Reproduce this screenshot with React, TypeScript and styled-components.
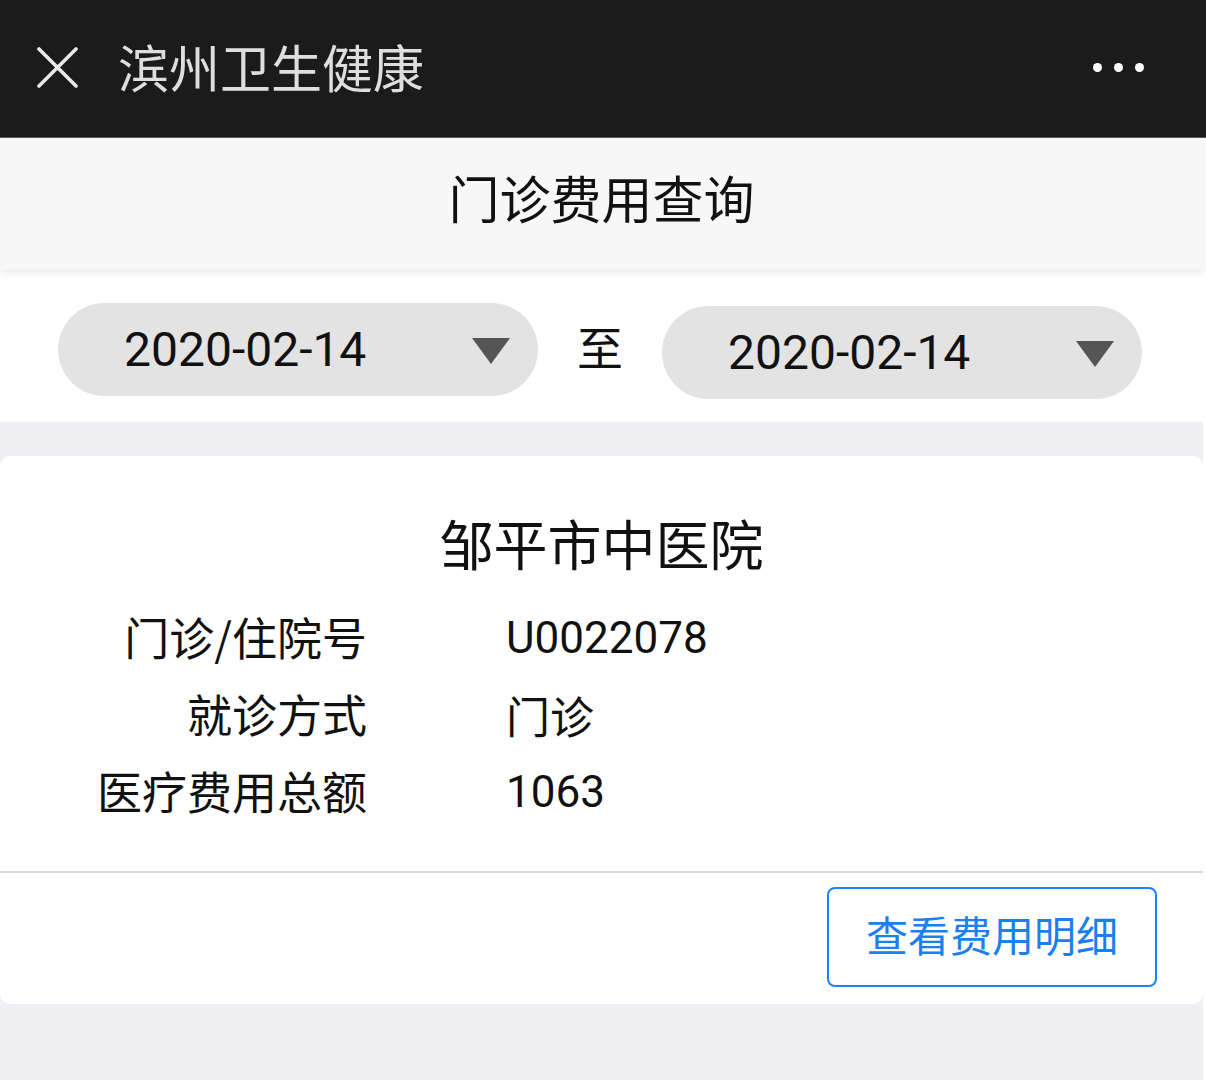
import { createGlobalStyle, styled } from "styled-components"

const GlobalStyle = createGlobalStyle`
  html, body {
    margin: 0;
    padding: 0;
    background: #ffffff;
  }
  body {
    font-family: Roboto, "Noto Sans CJK SC", sans-serif;
    color: #111111;
  }
  * {
    box-sizing: border-box;
  }
`

interface InfoRow {
  label: string
  value: string
}

const rows: InfoRow[] = [
  { label: '门诊/住院号', value: 'U0022078' },
  { label: '就诊方式', value: '门诊' },
  { label: '医疗费用总额', value: '1063' },
]

export default function App() {
  return <>
    <GlobalStyle />
    <TopBar>
      <Close>
        <svg width="41" height="41" viewBox="0 0 41 41">
          <path d="M2 2 L39 39 M39 2 L2 39" stroke="#e8e8e8" strokeWidth="3.6" strokeLinecap="round" />
        </svg>
      </Close>
      <AppName>滨州卫生健康</AppName>
      <More>
        <Dot />
        <Dot />
        <Dot />
      </More>
    </TopBar>

    <Page>
      <SubHeader>门诊费用查询</SubHeader>

      <DateRow>
        <DatePill>
          <DateText>2020-02-14</DateText>
          <Arrow />
        </DatePill>
        <To>至</To>
        <DatePill $offset={3}>
          <DateText>2020-02-14</DateText>
          <Arrow />
        </DatePill>
      </DateRow>

      <Card>
        <CardBody>
          <Hospital>邹平市中医院</Hospital>
          {
            rows.map(r => (
              <Row key={r.label}>
                <Label>{r.label}</Label>
                <Value>{r.value}</Value>
              </Row>
            ))
          }
        </CardBody>
        <CardFooter>
          <DetailButton>查看费用明细</DetailButton>
        </CardFooter>
      </Card>
    </Page>
  </>
}

const TopBar = styled.header`
  height: 138px;
  background-color: #1b1b1b;
  display: flex;
  align-items: center;
  padding: 0 62px 0 37px;
  border-bottom: 1px solid #5a5a5a;
`

const Close = styled.div`
  width: 41px;
  height: 41px;
  display: flex;
  margin-top: -2px;
`

const AppName = styled.h1`
  margin: -6px 0 0 40px;
  font-size: 51px;
  font-weight: 400;
  line-height: 60px;
  color: #dedede;
  font-family: "Noto Sans CJK SC", sans-serif;
  flex: 1;
`

const More = styled.div`
  display: flex;
  gap: 12px;
  align-items: center;
  margin-top: -2px;
`

const Dot = styled.span`
  width: 9px;
  height: 9px;
  border-radius: 50%;
  background: #ffffff;
`

const Page = styled.main`
  width: calc(100% - 3px);
  min-height: calc(100vh - 138px);
  background-color: #efeff4;
`

const SubHeader = styled.div`
  height: 132px;
  background-color: #f7f7f7;
  display: flex;
  align-items: center;
  justify-content: center;
  padding-bottom: 14px;
  font-size: 51px;
  line-height: 60px;
  font-family: "Noto Sans CJK SC", sans-serif;
  color: #111;
  box-shadow: 0 3px 8px rgba(0, 0, 0, 0.09);
  position: relative;
  z-index: 1;
`

const DateRow = styled.div`
  height: 152px;
  background: #ffffff;
  display: flex;
  justify-content: flex-start;
  align-items: flex-start;
  gap: 39px;
  padding: 33px 0 0 58px;
`

const DatePill = styled.div<{ $offset?: number }>`
  width: 480px;
  height: 93px;
  border-radius: 47px;
  background-color: #e3e3e3;
  display: flex;
  align-items: center;
  justify-content: space-between;
  padding: 0 28px 0 66px;
  margin-top: ${p => p.$offset || 0}px;
`

const DateText = styled.span`
  font-family: Roboto, sans-serif;
  font-size: 48px;
  color: #111;
  line-height: 1;
`

const Arrow = styled.span`
  width: 0;
  height: 0;
  border-left: 19px solid transparent;
  border-right: 19px solid transparent;
  border-top: 26px solid #555555;
  margin-top: 2px;
`

const To = styled.span`
  font-size: 46px;
  line-height: 50px;
  margin-top: 17px;
  font-family: "Noto Sans CJK SC", sans-serif;
  color: #111;
`

const Card = styled.section`
  margin-top: 34px;
  background: #ffffff;
  border-radius: 10px;
`

const CardBody = styled.div`
  padding: 57px 0 42px;
  border-bottom: 2px solid #dadada;
`

const Hospital = styled.h2`
  margin: 0 0 25px;
  text-align: center;
  font-size: 54px;
  font-weight: 400;
  line-height: 60px;
  font-family: "Noto Sans CJK SC", sans-serif;
  color: #111;
`

const Row = styled.div`
  display: grid;
  grid-template-columns: 367px 1fr;
  column-gap: 139px;
  height: 77px;
  align-items: center;
  font-size: 45px;
`

const Label = styled.span`
  text-align: right;
  font-family: "Noto Sans CJK SC", sans-serif;
  color: #111;
  margin-top: -1px;
`

const Value = styled.span`
  font-family: Roboto, "Noto Sans CJK SC", sans-serif;
  font-size: 44px;
  color: #111;
  margin-top: 2px;
`

const CardFooter = styled.div`
  height: 131px;
  display: flex;
  justify-content: flex-end;
  align-items: flex-start;
  padding: 14px 46px 0 0;
`

const DetailButton = styled.button`
  width: 330px;
  height: 100px;
  border: 2px solid #1a84f8;
  border-radius: 8px;
  background: #ffffff;
  color: #1a80f2;
  font-size: 42px;
  font-family: "Noto Sans CJK SC", sans-serif;
  padding: 0 0 8px;
  cursor: pointer;
`
